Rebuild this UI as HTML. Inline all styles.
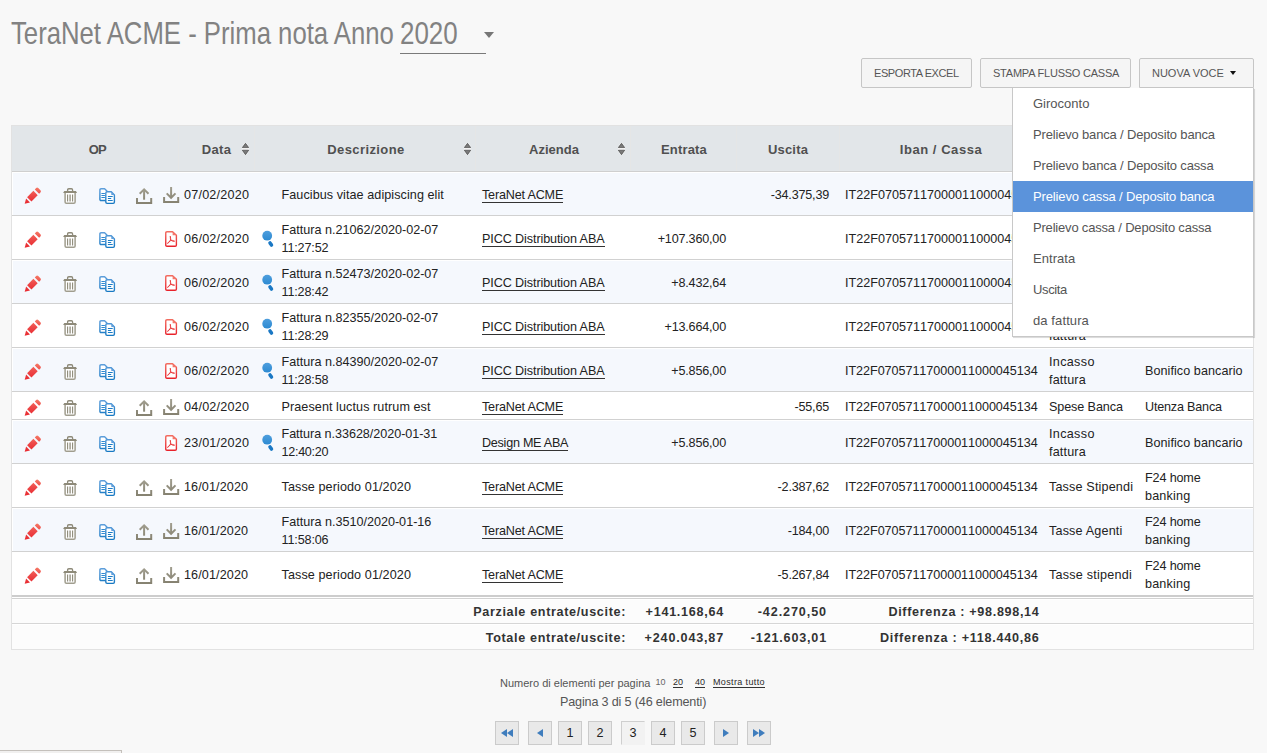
<!DOCTYPE html>
<html lang="it"><head><meta charset="utf-8"><title>TeraNet ACME - Prima nota</title>
<style>
*{box-sizing:border-box;margin:0;padding:0}
html,body{width:1267px;height:753px;overflow:hidden;background:#f8f8f8}
body{position:relative;font-family:"Liberation Sans",sans-serif;font-size:13px;color:#222;line-height:18px}
.abs{position:absolute}
/* title */
#title{position:absolute;left:11px;top:13px;height:40px;line-height:40px;font-size:31.5px;color:#828282;white-space:nowrap;transform-origin:0 50%;transform:scaleX(.816)}
#year{position:absolute;left:400px;top:13px;height:40px;line-height:40px;font-size:31.5px;color:#828282;white-space:nowrap;transform-origin:0 50%;transform:scaleX(.824)}
#yline{position:absolute;left:400px;top:53px;width:86px;height:1px;background:#7a7a7a}
#ycaret{position:absolute;left:484px;top:32px;width:0;height:0;border-left:5px solid transparent;border-right:5px solid transparent;border-top:6px solid #777}
/* buttons */
.btn{position:absolute;top:58px;height:30px;border:1px solid #c6c6c6;border-radius:2px;background:#f5f5f5;color:#555;font-size:11px;line-height:28px;text-align:left;padding-left:12px;white-space:nowrap;text-transform:uppercase}
/* table */
#tbl{position:absolute;left:11px;top:125px;width:1243px;height:525px;background:#fff;border:1px solid #e2e2e2}
#thead{position:absolute;left:0;top:0;width:1241px;height:45px;background:#e2e6e9}
#theadline{position:absolute;left:0;top:45px;width:1241px;height:1px;background:#cfcfcf}
.th{position:absolute;top:0;height:45px;line-height:48px;font-weight:bold;font-size:13px;color:#505050;text-align:center;white-space:nowrap}
.vsep{position:absolute;top:0;width:1px;height:45px;background:#e5e6e6}
.sort{position:absolute;top:17px;width:7px;height:12px}
.row{position:absolute;left:0;width:1241px;border-bottom:1px solid #d1d1d1;background:#fff;font-size:12.6px}
.row.odd{background:#f5f8fd;box-shadow:inset 1px 1px 0 #fff}
.c{position:absolute;top:0;height:100%;display:flex;align-items:center;white-space:nowrap}
.c.r{justify-content:flex-end}
.c span.t{display:block;position:relative;top:1px}
a.lk{display:inline-block;color:#222;text-decoration:none;border-bottom:1px solid #333;line-height:15px;height:15px;position:relative;top:1.5px}
.l{white-space:nowrap}
.nk{font-kerning:none}
.l.b{display:block}
.ic{position:absolute;overflow:visible}
.frow{position:absolute;left:0;width:1241px;height:24px;background:#fcfcfc;font-weight:bold;font-size:12.6px;color:#333}
.frow .c span.t{top:1px}
/* dropdown */
#dd{position:absolute;left:1012px;top:88px;width:242px;height:249px;background:#fff;border:1px solid #c8c8c8;border-top:none;box-shadow:1px 1px 0 rgba(0,0,0,.09),1px 1px 1px rgba(0,0,0,.05)}
#dd div{height:31px;line-height:31px;padding-left:20px;color:#555;font-size:13px;white-space:nowrap}
#dd div.sel{background:#5b93db;color:#fff}
/* pager */
.pg{position:absolute;top:721px;width:24px;height:24px;border:1px solid #cbcbcb;background:#e9e9e9;text-align:center;line-height:22px;font-size:12.6px;color:#222}
.pg.cur{background:#f2f2f2;border-color:#cfcfcf #f2f2f2 #f2f2f2 #cfcfcf}
.pg svg{position:absolute;left:0;top:0}
.pinfo{position:absolute;white-space:nowrap;color:#555}
.pl{font-size:9px;color:#2b2b2b;height:15px;line-height:18px;border-bottom:1px solid #333}
</style></head>
<body>

<svg width="0" height="0" style="position:absolute">
<defs>
<linearGradient id="gR" gradientUnits="userSpaceOnUse" gradientTransform="rotate(45)" x1="0" y1="-16.5" x2="0" y2="0"><stop offset="0" stop-color="#f57a66"/><stop offset=".45" stop-color="#ee4b4a"/><stop offset="1" stop-color="#e8282f"/></linearGradient>
<linearGradient id="gG" gradientUnits="userSpaceOnUse" x1="0" y1="0" x2="0" y2="16"><stop offset="0" stop-color="#a19e8f"/><stop offset="1" stop-color="#858170"/></linearGradient>
<linearGradient id="gB" gradientUnits="userSpaceOnUse" x1="0" y1="0" x2="0" y2="16"><stop offset="0" stop-color="#5f9fdc"/><stop offset="1" stop-color="#1678c2"/></linearGradient>
<linearGradient id="gP" gradientUnits="userSpaceOnUse" x1="0" y1="0" x2="0" y2="16"><stop offset="0" stop-color="#f26f62"/><stop offset="1" stop-color="#e8202a"/></linearGradient>
<linearGradient id="gM" gradientUnits="userSpaceOnUse" x1="0" y1="0" x2="0" y2="10"><stop offset="0" stop-color="#4f9edd"/><stop offset="1" stop-color="#2c8ad2"/></linearGradient>
<symbol id="i-pen" viewBox="0 0 17 17" overflow="visible">
 <g transform="translate(0.2,16.35) rotate(-45)" fill="url(#gR)">
  <path d="M0,0 L4.75,-2.75 V2.75 Z"/>
  <path d="M6.45,-3.05 H15.35 V3.05 H6.45 Z"/>
  <path d="M17.35,-3.05 H19.2 Q20.7,-3.05 20.7,-1.55 V1.55 Q20.7,3.05 19.2,3.05 H17.35 Z"/>
 </g>
</symbol>
<symbol id="i-trash" viewBox="0 0 15 17" overflow="visible">
 <path fill="none" stroke="#8e8a79" stroke-width="1.3" d="M4.7,3.4 V2 Q4.7,0.85 5.9,0.85 H8.5 Q9.7,0.85 9.7,2 V3.4"/>
 <path fill="#8e8a79" d="M0.2,5.1 L1.4,3.2 H13 L14.2,5.1 Z"/>
 <path fill="#fff" stroke="#a09d8e" stroke-width="1.5" d="M2.2,5.1 V14.1 Q2.2,15.4 3.5,15.4 H10.9 Q12.2,15.4 12.2,14.1 V5.1"/>
 <path fill="none" stroke="#8e8a79" stroke-width="1.1" d="M4.7,6.6 V13.7 M9.7,6.6 V13.7"/>
 <path fill="none" stroke="#aaa79a" stroke-width="1.7" d="M7.2,6.6 V13.7"/>
</symbol>
<symbol id="i-copy" viewBox="0 0 17 17" overflow="visible">
 <path fill="#fff" stroke="url(#gB)" stroke-width="1.4" stroke-linejoin="round" d="M2.1,0.8 H5.6 L7.9,3.1 V11.4 Q7.9,12.6 6.7,12.6 H2.1 Q0.9,12.6 0.9,11.4 V2 Q0.9,0.8 2.1,0.8 Z"/>
 <path fill="none" stroke="#2e88d0" stroke-width="1.1" d="M2.4,5.6 H5.9 M2.4,7.6 H5.9 M2.4,9.6 H5.9"/>
 <path fill="#fff" stroke="url(#gB)" stroke-width="1.4" stroke-linejoin="round" d="M8.1,3.8 H12.3 L15.4,7 V14.2 Q15.4,15.5 14.1,15.5 H8.1 Q6.8,15.5 6.8,14.2 V5.1 Q6.8,3.8 8.1,3.8 Z"/>
 <path fill="#5f9fdc" d="M12.3,3.8 L15.4,7 H12.3 Z"/>
 <path fill="none" stroke="#1b7cc6" stroke-width="1.1" d="M8.9,8.6 H13.7 M8.9,10.6 H12.2 M8.9,12.6 H13.7"/>
</symbol>
<symbol id="i-up" viewBox="0 0 17 17" overflow="visible">
 <path fill="none" stroke="url(#gG)" stroke-width="2" d="M1.1,10 V15.2 H15.3 V10"/>
 <path fill="none" stroke="url(#gG)" stroke-width="2" d="M8.2,1.6 V11.8"/>
 <path fill="none" stroke="url(#gG)" stroke-width="2" d="M3.8,5.8 L8.2,1.4 L12.6,5.8"/>
</symbol>
<symbol id="i-down" viewBox="0 0 17 17" overflow="visible">
 <path fill="none" stroke="url(#gG)" stroke-width="2" d="M1.1,10 V15.1 H15.2 V10"/>
 <path fill="none" stroke="url(#gG)" stroke-width="2" d="M8.1,0 V10.6"/>
 <path fill="none" stroke="url(#gG)" stroke-width="2" d="M3.7,6.4 L8.1,10.8 L12.5,6.4"/>
</symbol>
<symbol id="i-pdf" viewBox="0 0 13 17" overflow="visible">
 <path fill="#fff" stroke="url(#gP)" stroke-width="1.4" stroke-linejoin="round" d="M2,0.75 H7.6 L11.4,4.2 V14.1 Q11.4,15.3 10.2,15.3 H2 Q0.75,15.3 0.75,14.1 V2 Q0.75,0.75 2,0.75 Z"/>
 <path fill="#f3786b" d="M7.6,0.75 L11.4,4.2 H7.6 Z"/>
 <path fill="none" stroke="#ea3a3d" stroke-width="0.9" stroke-linecap="round" stroke-linejoin="round" d="M5.3,5.6 Q5.9,7.6 5.5,9 Q4.6,11.4 2.5,12.5 Q2.9,11.2 5.5,9.6 Q7.6,9 9.6,10.2 Q8.4,10.9 6.4,9.5 Q5,8 5.3,5.6"/>
</symbol>
<symbol id="i-mag" viewBox="0 0 13 17" overflow="visible">
 <circle cx="5.2" cy="5" r="4.9" fill="url(#gM)"/>
 <path fill="none" stroke="#1a78c4" stroke-width="3.5" stroke-linecap="round" d="M8.0,12.2 L9.5,14.4"/>
</symbol>
<symbol id="i-sort" viewBox="0 0 7 12" overflow="visible">
 <path fill="none" stroke="#fff" stroke-opacity=".5" stroke-width="1.6" stroke-linejoin="round" d="M3.5,0 L7,4.9 H0 Z M0,6.9 H7 L3.5,12 Z"/>
 <rect x="0" y="4.9" width="7" height="2" fill="#fff" fill-opacity=".85"/>
 <path fill="#7a7a7a" stroke="#474747" stroke-width=".7" stroke-linejoin="round" d="M3.5,0.3 L6.7,4.6 H0.3 Z M0.3,7.2 H6.7 L3.5,11.7 Z"/>
</symbol>
</defs>
</svg>

<div id="title">TeraNet ACME - Prima nota Anno</div>
<div id="year">2020</div><div id="yline"></div><div id="ycaret"></div>
<div class="btn" id="b1" style="left:861px;width:111px"><span class="l" style="letter-spacing:-0.42px">Esporta Excel</span></div>
<div class="btn" id="b2" style="left:980px;width:151px"><span class="l" style="letter-spacing:-0.22px">Stampa flusso cassa</span></div>
<div class="btn" id="b3" style="left:1139px;width:115px;border-radius:2px 2px 0 0"><span class="l" style="letter-spacing:-0.01px">Nuova voce</span><span class="abs" style="left:90px;top:12px;width:0;height:0;border-left:3.7px solid transparent;border-right:3.7px solid transparent;border-top:4.6px solid #111"></span></div>
<div id="tbl">
<div id="thead"><div class="vsep" style="left:166px"></div><div class="vsep" style="left:242px"></div><div class="vsep" style="left:463px"></div><div class="vsep" style="left:618px"></div><div class="vsep" style="left:724px"></div><div class="vsep" style="left:827px"></div><div class="vsep" style="left:1031px"></div><div class="vsep" style="left:1127px"></div><div class="th" style="left:-14.599999999999994px;width:200px"><span class="l" style="display:inline-block;line-height:15px;letter-spacing:-0.80px">OP</span></div><div class="th" style="left:104.5px;width:200px"><span class="l" style="letter-spacing:0.34px">Data</span></div><div class="th" style="left:254.0px;width:200px"><span class="l" style="letter-spacing:0.40px">Descrizione</span></div><div class="th" style="left:442.0px;width:200px"><span class="l">Azienda</span></div><div class="th" style="left:572.0px;width:200px"><span class="l" style="letter-spacing:0.17px">Entrata</span></div><div class="th" style="left:676.0px;width:200px"><span class="l" style="letter-spacing:0.20px">Uscita</span></div><div class="th" style="left:829.0px;width:200px"><span class="l" style="letter-spacing:0.55px">Iban / Cassa</span></div><div class="th" style="left:980.0px;width:200px"><span class="l">Causale</span></div><div class="th" style="left:1084.0px;width:200px"><span class="l">Modalit&agrave;</span></div><svg class="sort" style="left:230px"><use href="#i-sort"/></svg><svg class="sort" style="left:452px"><use href="#i-sort"/></svg><svg class="sort" style="left:606px"><use href="#i-sort"/></svg></div><div id="theadline"></div>
<div class="row odd" style="top:46px;height:44px"><svg class="ic" style="left:12px;top:15px" width="17" height="17"><use href="#i-pen" x="0.5" y="0.5"/></svg><svg class="ic" style="left:50px;top:15px" width="15" height="17"><use href="#i-trash" x="0.9" y="0.9"/></svg><svg class="ic" style="left:87px;top:15px" width="17" height="17"><use href="#i-copy" x="0" y="0.9"/></svg><svg class="ic" style="left:123px;top:15px" width="17" height="17"><use href="#i-up" x="0.9" y="0.9"/></svg><svg class="ic" style="left:151px;top:15px" width="17" height="17"><use href="#i-down"/></svg><div class="c" style="left:172px;width:70px"><span class="t"><span class="l" style="letter-spacing:0.21px">07/02/2020</span></span></div><div class="c" style="left:269.5px;width:190px"><span class="t"><span class="l" style="letter-spacing:0.07px">Faucibus vitae adipiscing elit</span></span></div><div class="c" style="left:470px;width:150px"><a class="lk"><span class="l" style="letter-spacing:-0.18px">TeraNet ACME</span></a></div><div class="c r" style="left:728px;width:89px"><span class="t"><span class="l" style="letter-spacing:-0.20px">-34.375,39</span></span></div><div class="c nk" style="left:833px;width:196px"><span class="t"><span class="l" style="letter-spacing:0.01px">IT22F07057117000011000045134</span></span></div><div class="c" style="left:1037px;width:92px"><span class="t"><span class="l b">Spese</span><span class="l b">generali</span></span></div><div class="c" style="left:1133px;width:105px"><span class="t"><span class="l" style="letter-spacing:0.06px">Bonifico bancario</span></span></div></div>
<div class="row" style="top:90px;height:44px"><svg class="ic" style="left:12px;top:15px" width="17" height="17"><use href="#i-pen" x="0.5" y="0.5"/></svg><svg class="ic" style="left:50px;top:15px" width="15" height="17"><use href="#i-trash" x="0.9" y="0.9"/></svg><svg class="ic" style="left:87px;top:15px" width="17" height="17"><use href="#i-copy" x="0" y="0.9"/></svg><svg class="ic" style="left:153px;top:15px" width="13" height="17"><use href="#i-pdf"/></svg><div class="c" style="left:172px;width:70px"><span class="t"><span class="l" style="letter-spacing:0.21px">06/02/2020</span></span></div><svg class="ic" style="left:250px;top:14px" width="13" height="17"><use href="#i-mag" x="0" y="0.7"/></svg><div class="c" style="left:269.5px;width:190px"><span class="t"><span class="l b">Fattura n.21062/2020-02-07</span><span class="l b" style="letter-spacing:-0.15px">11:27:52</span></span></div><div class="c" style="left:470px;width:150px"><a class="lk"><span class="l" style="letter-spacing:-0.10px">PICC Distribution ABA</span></a></div><div class="c r" style="left:628px;width:86px"><span class="t"><span class="l" style="letter-spacing:-0.19px">+107.360,00</span></span></div><div class="c nk" style="left:833px;width:196px"><span class="t"><span class="l" style="letter-spacing:0.01px">IT22F07057117000011000045134</span></span></div><div class="c" style="left:1037px;width:92px"><span class="t"><span class="l b" style="letter-spacing:0.33px">Incasso</span><span class="l b" style="letter-spacing:0.17px">fattura</span></span></div><div class="c" style="left:1133px;width:105px"><span class="t"><span class="l" style="letter-spacing:0.06px">Bonifico bancario</span></span></div></div>
<div class="row odd" style="top:134px;height:44px"><svg class="ic" style="left:12px;top:15px" width="17" height="17"><use href="#i-pen" x="0.5" y="0.5"/></svg><svg class="ic" style="left:50px;top:15px" width="15" height="17"><use href="#i-trash" x="0.9" y="0.9"/></svg><svg class="ic" style="left:87px;top:15px" width="17" height="17"><use href="#i-copy" x="0" y="0.9"/></svg><svg class="ic" style="left:153px;top:15px" width="13" height="17"><use href="#i-pdf"/></svg><div class="c" style="left:172px;width:70px"><span class="t"><span class="l" style="letter-spacing:0.21px">06/02/2020</span></span></div><svg class="ic" style="left:250px;top:14px" width="13" height="17"><use href="#i-mag" x="0" y="0.7"/></svg><div class="c" style="left:269.5px;width:190px"><span class="t"><span class="l b">Fattura n.52473/2020-02-07</span><span class="l b" style="letter-spacing:-0.15px">11:28:42</span></span></div><div class="c" style="left:470px;width:150px"><a class="lk"><span class="l" style="letter-spacing:-0.10px">PICC Distribution ABA</span></a></div><div class="c r" style="left:628px;width:86px"><span class="t"><span class="l" style="letter-spacing:-0.19px">+8.432,64</span></span></div><div class="c nk" style="left:833px;width:196px"><span class="t"><span class="l" style="letter-spacing:0.01px">IT22F07057117000011000045134</span></span></div><div class="c" style="left:1037px;width:92px"><span class="t"><span class="l b" style="letter-spacing:0.33px">Incasso</span><span class="l b" style="letter-spacing:0.17px">fattura</span></span></div><div class="c" style="left:1133px;width:105px"><span class="t"><span class="l" style="letter-spacing:0.06px">Bonifico bancario</span></span></div></div>
<div class="row" style="top:178px;height:44px"><svg class="ic" style="left:12px;top:15px" width="17" height="17"><use href="#i-pen" x="0.5" y="0.5"/></svg><svg class="ic" style="left:50px;top:15px" width="15" height="17"><use href="#i-trash" x="0.9" y="0.9"/></svg><svg class="ic" style="left:87px;top:15px" width="17" height="17"><use href="#i-copy" x="0" y="0.9"/></svg><svg class="ic" style="left:153px;top:15px" width="13" height="17"><use href="#i-pdf"/></svg><div class="c" style="left:172px;width:70px"><span class="t"><span class="l" style="letter-spacing:0.21px">06/02/2020</span></span></div><svg class="ic" style="left:250px;top:14px" width="13" height="17"><use href="#i-mag" x="0" y="0.7"/></svg><div class="c" style="left:269.5px;width:190px"><span class="t"><span class="l b">Fattura n.82355/2020-02-07</span><span class="l b" style="letter-spacing:-0.15px">11:28:29</span></span></div><div class="c" style="left:470px;width:150px"><a class="lk"><span class="l" style="letter-spacing:-0.10px">PICC Distribution ABA</span></a></div><div class="c r" style="left:628px;width:86px"><span class="t"><span class="l" style="letter-spacing:-0.19px">+13.664,00</span></span></div><div class="c nk" style="left:833px;width:196px"><span class="t"><span class="l" style="letter-spacing:0.01px">IT22F07057117000011000045134</span></span></div><div class="c" style="left:1037px;width:92px"><span class="t"><span class="l b" style="letter-spacing:0.33px">Incasso</span><span class="l b" style="letter-spacing:0.17px">fattura</span></span></div><div class="c" style="left:1133px;width:105px"><span class="t"><span class="l" style="letter-spacing:0.06px">Bonifico bancario</span></span></div></div>
<div class="row odd" style="top:222px;height:44px"><svg class="ic" style="left:12px;top:15px" width="17" height="17"><use href="#i-pen" x="0.5" y="0.5"/></svg><svg class="ic" style="left:50px;top:15px" width="15" height="17"><use href="#i-trash" x="0.9" y="0.9"/></svg><svg class="ic" style="left:87px;top:15px" width="17" height="17"><use href="#i-copy" x="0" y="0.9"/></svg><svg class="ic" style="left:153px;top:15px" width="13" height="17"><use href="#i-pdf"/></svg><div class="c" style="left:172px;width:70px"><span class="t"><span class="l" style="letter-spacing:0.21px">06/02/2020</span></span></div><svg class="ic" style="left:250px;top:14px" width="13" height="17"><use href="#i-mag" x="0" y="0.7"/></svg><div class="c" style="left:269.5px;width:190px"><span class="t"><span class="l b">Fattura n.84390/2020-02-07</span><span class="l b" style="letter-spacing:-0.15px">11:28:58</span></span></div><div class="c" style="left:470px;width:150px"><a class="lk"><span class="l" style="letter-spacing:-0.10px">PICC Distribution ABA</span></a></div><div class="c r" style="left:628px;width:86px"><span class="t"><span class="l" style="letter-spacing:-0.19px">+5.856,00</span></span></div><div class="c nk" style="left:833px;width:196px"><span class="t"><span class="l" style="letter-spacing:-0.05px">IT22F07057117000011000045134</span></span></div><div class="c" style="left:1037px;width:92px"><span class="t"><span class="l b" style="letter-spacing:0.33px">Incasso</span><span class="l b" style="letter-spacing:0.17px">fattura</span></span></div><div class="c" style="left:1133px;width:105px"><span class="t"><span class="l" style="letter-spacing:0.06px">Bonifico bancario</span></span></div></div>
<div class="row" style="top:266px;height:28px"><svg class="ic" style="left:12px;top:7px" width="17" height="17"><use href="#i-pen" x="0.5" y="0.5"/></svg><svg class="ic" style="left:50px;top:7px" width="15" height="17"><use href="#i-trash" x="0.9" y="0.9"/></svg><svg class="ic" style="left:87px;top:7px" width="17" height="17"><use href="#i-copy" x="0" y="0.9"/></svg><svg class="ic" style="left:123px;top:7px" width="17" height="17"><use href="#i-up" x="0.9" y="0.9"/></svg><svg class="ic" style="left:151px;top:7px" width="17" height="17"><use href="#i-down"/></svg><div class="c" style="left:172px;width:70px"><span class="t"><span class="l" style="letter-spacing:0.21px">04/02/2020</span></span></div><div class="c" style="left:269.5px;width:190px"><span class="t"><span class="l" style="letter-spacing:0.08px">Praesent luctus rutrum est</span></span></div><div class="c" style="left:470px;width:150px"><a class="lk"><span class="l" style="letter-spacing:-0.18px">TeraNet ACME</span></a></div><div class="c r" style="left:728px;width:89px"><span class="t"><span class="l" style="letter-spacing:-0.20px">-55,65</span></span></div><div class="c nk" style="left:833px;width:196px"><span class="t"><span class="l" style="letter-spacing:-0.05px">IT22F07057117000011000045134</span></span></div><div class="c" style="left:1037px;width:92px"><span class="t"><span class="l" style="letter-spacing:-0.10px">Spese Banca</span></span></div><div class="c" style="left:1133px;width:105px"><span class="t"><span class="l" style="letter-spacing:-0.19px">Utenza Banca</span></span></div></div>
<div class="row odd" style="top:294px;height:44px"><svg class="ic" style="left:12px;top:15px" width="17" height="17"><use href="#i-pen" x="0.5" y="0.5"/></svg><svg class="ic" style="left:50px;top:15px" width="15" height="17"><use href="#i-trash" x="0.9" y="0.9"/></svg><svg class="ic" style="left:87px;top:15px" width="17" height="17"><use href="#i-copy" x="0" y="0.9"/></svg><svg class="ic" style="left:153px;top:15px" width="13" height="17"><use href="#i-pdf"/></svg><div class="c" style="left:172px;width:70px"><span class="t"><span class="l" style="letter-spacing:0.21px">23/01/2020</span></span></div><svg class="ic" style="left:250px;top:14px" width="13" height="17"><use href="#i-mag" x="0" y="0.7"/></svg><div class="c" style="left:269.5px;width:190px"><span class="t"><span class="l b" style="letter-spacing:-0.04px">Fattura n.33628/2020-01-31</span><span class="l b" style="letter-spacing:-0.29px">12:40:20</span></span></div><div class="c" style="left:470px;width:150px"><a class="lk"><span class="l" style="letter-spacing:-0.26px">Design ME ABA</span></a></div><div class="c r" style="left:628px;width:86px"><span class="t"><span class="l" style="letter-spacing:-0.19px">+5.856,00</span></span></div><div class="c nk" style="left:833px;width:196px"><span class="t"><span class="l" style="letter-spacing:-0.05px">IT22F07057117000011000045134</span></span></div><div class="c" style="left:1037px;width:92px"><span class="t"><span class="l b" style="letter-spacing:0.33px">Incasso</span><span class="l b" style="letter-spacing:0.17px">fattura</span></span></div><div class="c" style="left:1133px;width:105px"><span class="t"><span class="l" style="letter-spacing:0.06px">Bonifico bancario</span></span></div></div>
<div class="row" style="top:338px;height:44px"><svg class="ic" style="left:12px;top:15px" width="17" height="17"><use href="#i-pen" x="0.5" y="0.5"/></svg><svg class="ic" style="left:50px;top:15px" width="15" height="17"><use href="#i-trash" x="0.9" y="0.9"/></svg><svg class="ic" style="left:87px;top:15px" width="17" height="17"><use href="#i-copy" x="0" y="0.9"/></svg><svg class="ic" style="left:123px;top:15px" width="17" height="17"><use href="#i-up" x="0.9" y="0.9"/></svg><svg class="ic" style="left:151px;top:15px" width="17" height="17"><use href="#i-down"/></svg><div class="c" style="left:172px;width:70px"><span class="t"><span class="l" style="letter-spacing:0.12px">16/01/2020</span></span></div><div class="c" style="left:269.5px;width:190px"><span class="t"><span class="l" style="letter-spacing:0.10px">Tasse periodo 01/2020</span></span></div><div class="c" style="left:470px;width:150px"><a class="lk"><span class="l" style="letter-spacing:-0.18px">TeraNet ACME</span></a></div><div class="c r" style="left:728px;width:89px"><span class="t"><span class="l" style="letter-spacing:-0.20px">-2.387,62</span></span></div><div class="c nk" style="left:833px;width:196px"><span class="t"><span class="l" style="letter-spacing:-0.05px">IT22F07057117000011000045134</span></span></div><div class="c" style="left:1037px;width:92px"><span class="t"><span class="l" style="letter-spacing:0.16px">Tasse Stipendi</span></span></div><div class="c" style="left:1133px;width:105px"><span class="t"><span class="l b" style="letter-spacing:-0.14px">F24 home</span><span class="l b" style="letter-spacing:0.17px">banking</span></span></div></div>
<div class="row odd" style="top:382px;height:44px"><svg class="ic" style="left:12px;top:15px" width="17" height="17"><use href="#i-pen" x="0.5" y="0.5"/></svg><svg class="ic" style="left:50px;top:15px" width="15" height="17"><use href="#i-trash" x="0.9" y="0.9"/></svg><svg class="ic" style="left:87px;top:15px" width="17" height="17"><use href="#i-copy" x="0" y="0.9"/></svg><svg class="ic" style="left:123px;top:15px" width="17" height="17"><use href="#i-up" x="0.9" y="0.9"/></svg><svg class="ic" style="left:151px;top:15px" width="17" height="17"><use href="#i-down"/></svg><div class="c" style="left:172px;width:70px"><span class="t"><span class="l" style="letter-spacing:0.12px">16/01/2020</span></span></div><div class="c" style="left:269.5px;width:190px"><span class="t"><span class="l b">Fattura n.3510/2020-01-16</span><span class="l b" style="letter-spacing:-0.14px">11:58:06</span></span></div><div class="c" style="left:470px;width:150px"><a class="lk"><span class="l" style="letter-spacing:-0.18px">TeraNet ACME</span></a></div><div class="c r" style="left:728px;width:89px"><span class="t"><span class="l" style="letter-spacing:-0.20px">-184,00</span></span></div><div class="c nk" style="left:833px;width:196px"><span class="t"><span class="l" style="letter-spacing:-0.05px">IT22F07057117000011000045134</span></span></div><div class="c" style="left:1037px;width:92px"><span class="t"><span class="l" style="letter-spacing:0.17px">Tasse Agenti</span></span></div><div class="c" style="left:1133px;width:105px"><span class="t"><span class="l b" style="letter-spacing:-0.14px">F24 home</span><span class="l b" style="letter-spacing:0.17px">banking</span></span></div></div>
<div class="row" style="top:426px;height:44px"><svg class="ic" style="left:12px;top:15px" width="17" height="17"><use href="#i-pen" x="0.5" y="0.5"/></svg><svg class="ic" style="left:50px;top:15px" width="15" height="17"><use href="#i-trash" x="0.9" y="0.9"/></svg><svg class="ic" style="left:87px;top:15px" width="17" height="17"><use href="#i-copy" x="0" y="0.9"/></svg><svg class="ic" style="left:123px;top:15px" width="17" height="17"><use href="#i-up" x="0.9" y="0.9"/></svg><svg class="ic" style="left:151px;top:15px" width="17" height="17"><use href="#i-down"/></svg><div class="c" style="left:172px;width:70px"><span class="t"><span class="l" style="letter-spacing:0.12px">16/01/2020</span></span></div><div class="c" style="left:269.5px;width:190px"><span class="t"><span class="l" style="letter-spacing:0.10px">Tasse periodo 01/2020</span></span></div><div class="c" style="left:470px;width:150px"><a class="lk"><span class="l" style="letter-spacing:-0.18px">TeraNet ACME</span></a></div><div class="c r" style="left:728px;width:89px"><span class="t"><span class="l" style="letter-spacing:-0.20px">-5.267,84</span></span></div><div class="c nk" style="left:833px;width:196px"><span class="t"><span class="l" style="letter-spacing:-0.05px">IT22F07057117000011000045134</span></span></div><div class="c" style="left:1037px;width:92px"><span class="t"><span class="l" style="letter-spacing:0.23px">Tasse stipendi</span></span></div><div class="c" style="left:1133px;width:105px"><span class="t"><span class="l b" style="letter-spacing:-0.14px">F24 home</span><span class="l b" style="letter-spacing:0.17px">banking</span></span></div></div>
<div class="abs" style="left:0;top:469px;width:1241px;height:2px;background:#cdcdcd"></div><div class="abs" style="left:0;top:471px;width:1241px;height:1px;background:#fff"></div><div class="abs" style="left:0;top:472px;width:1241px;height:1px;background:#d2d2d2"></div><div class="abs" style="left:0;top:473px;width:1241px;height:1px;background:#fff"></div><div class="abs" style="left:0;top:497px;width:1241px;height:1px;background:#d6d6d6"></div><div class="frow" style="top:473px;height:24px;box-shadow:inset 0 1px 0 #fff"><div class="c r fa" style="left:418px;width:196px"><span class="t"><span class="l" style="letter-spacing:0.65px">Parziale entrate/uscite:</span></span></div><div class="c r fb" style="left:624px;width:88px"><span class="t"><span class="l" style="letter-spacing:0.73px">+141.168,64</span></span></div><div class="c r fb" style="left:728px;width:87px"><span class="t"><span class="l" style="letter-spacing:0.90px">-42.270,50</span></span></div><div class="c r fa" style="left:848px;width:179.5px"><span class="t"><span class="l" style="letter-spacing:0.68px">Differenza : +98.898,14</span></span></div></div><div class="frow" style="top:498px;height:25px;box-shadow:inset 0 1px 0 #fff"><div class="c r fa" style="left:418px;width:196px"><span class="t"><span class="l" style="letter-spacing:0.66px">Totale entrate/uscite:</span></span></div><div class="c r fb" style="left:624px;width:88px"><span class="t"><span class="l" style="letter-spacing:0.82px">+240.043,87</span></span></div><div class="c r fb" style="left:728px;width:87px"><span class="t"><span class="l" style="letter-spacing:0.81px">-121.603,01</span></span></div><div class="c r fa" style="left:848px;width:179.5px"><span class="t"><span class="l" style="letter-spacing:0.74px">Differenza : +118.440,86</span></span></div></div>
</div>
<div id="dd"><div><span class="l">Giroconto</span></div><div><span class="l" style="letter-spacing:-0.17px">Prelievo banca / Deposito banca</span></div><div><span class="l" style="letter-spacing:-0.17px">Prelievo banca / Deposito cassa</span></div><div class=sel><span class="l" style="letter-spacing:-0.14px">Prelievo cassa / Deposito banca</span></div><div><span class="l" style="letter-spacing:-0.19px">Prelievo cassa / Deposito cassa</span></div><div><span class="l" style="letter-spacing:0.05px">Entrata</span></div><div><span class="l" style="letter-spacing:-0.36px">Uscita</span></div><div><span class="l" style="letter-spacing:0.10px">da fattura</span></div></div>
<div class="pinfo" id="p1" style="left:500px;top:674px;font-size:11px"><span class="l">Numero di elementi per pagina</span></div>
<div class="pinfo" id="p10" style="left:655.5px;top:673px;font-size:9px;color:#666"><span class="l">10</span></div>
<div class="pinfo pl" id="p20" style="left:673px;top:673px"><span class="l">20</span></div>
<div class="pinfo pl" id="p40" style="left:695px;top:673px"><span class="l">40</span></div>
<div class="pinfo pl" id="pall" style="left:713px;top:673px"><span class="l" style="letter-spacing:0.37px">Mostra tutto</span></div>
<div class="pinfo" id="p2" style="left:560px;top:693px;font-size:12.6px"><span class="l" style="letter-spacing:-0.16px">Pagina 3 di 5 (46 elementi)</span></div>
<div class="pg" style="left:495px"><svg width="22" height="22" viewBox="1 1 22 22"><path fill="#3f7dbd" d="M6,12 L12,8 V16 Z M12,12 L18,8 V16 Z"/></svg></div><div class="pg" style="left:528px"><svg width="22" height="22" viewBox="1 1 22 22"><path fill="#3f7dbd" d="M9,12 L15,8 V16 Z"/></svg></div><div class="pg" style="left:558px">1</div><div class="pg" style="left:588px">2</div><div class="pg cur" style="left:621px">3</div><div class="pg" style="left:651px">4</div><div class="pg" style="left:681px">5</div><div class="pg" style="left:714px"><svg width="22" height="22" viewBox="1 1 22 22"><path fill="#3f7dbd" d="M15,12 L9,8 V16 Z"/></svg></div><div class="pg" style="left:747px"><svg width="22" height="22" viewBox="1 1 22 22"><path fill="#3f7dbd" d="M12,12 L6,8 V16 Z M18,12 L12,8 V16 Z"/></svg></div>
<div class="abs" style="left:-1px;top:750px;width:123px;height:5px;border:1px solid #c4c0bb;background:#f1f0ef"></div>
</body></html>
